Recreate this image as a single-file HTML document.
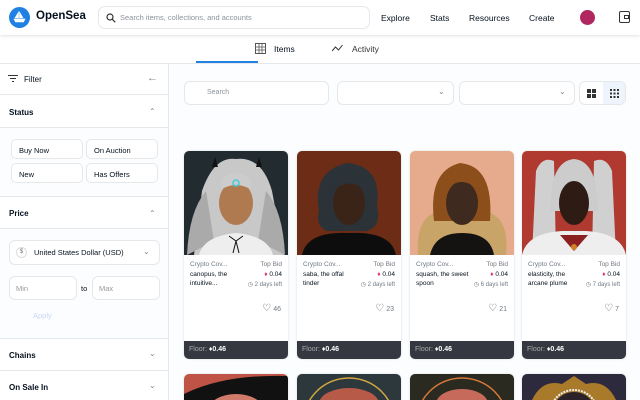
<!DOCTYPE html>
<html><head><meta charset="utf-8"><style>
*{box-sizing:border-box;margin:0;padding:0}
html,body{width:640px;height:400px;overflow:hidden}
body{font-family:"Liberation Sans",sans-serif;background:#fff;position:relative;color:#04111d}
.a{position:absolute}
.hdr{left:0;top:0;width:640px;height:35px;background:#fff;box-shadow:0 1px 3px rgba(0,0,0,.12);z-index:2}
.nav{font-size:8.5px;top:13px}
.tabs{left:0;top:35px;width:640px;height:29px;border-bottom:1px solid #e5e8eb}
.side{left:0;top:64px;width:169px;height:336px;border-right:1px solid #e5e8eb;background:#fff;overflow:hidden}
.sec{position:absolute;left:0;width:168px;border-bottom:1px solid #e5e8eb;font-size:8px;font-weight:bold}
.btn{position:absolute;height:20px;border:1px solid #e5e8eb;border-radius:5px;background:#fff;font-size:7.5px;padding:6px 0 0 7px;font-weight:normal}
.main{left:170px;top:64px;width:470px;height:336px;background:#fcfdfe}
.inp{position:absolute;height:24px;border:1px solid #e5e8eb;border-radius:6px;background:#fff}
.card{position:absolute;width:104px;height:208px;border-radius:5px;overflow:hidden;background:#fff;box-shadow:0 0 2px rgba(0,0,0,.15)}
.card svg{display:block}
.info{position:absolute;top:104px;left:0;width:104px;height:42px;font-size:6.5px;padding:6px 6px}
.floor{position:absolute;left:0;top:190px;width:104px;height:18px;background:#353840;color:#fff;font-size:7px;padding:5px 5px}
.chev{position:absolute;font-size:8px;color:#888;font-weight:normal}
</style></head><body>
<div class="a hdr">
 <svg class="a" style="left:9px;top:7px" width="21" height="21" viewBox="0 0 21 21"><circle cx="10.5" cy="10.5" r="10.5" fill="#2081e2"/><path d="M5 12h11l-1.5 3h-8z M9.5 4.5v7 M10.5 5l3.5 6h-3.5z M9 6l-3 5h3z" fill="#fff" stroke="#fff" stroke-width=".6"/></svg>
 <div class="a" style="left:36px;top:10px;font-size:11.5px;font-weight:bold">OpenSea</div>
 <div class="a" style="left:98px;top:6px;width:272px;height:23px;border:1px solid #e5e8eb;border-radius:7px">
  <svg class="a" style="left:7px;top:6px" width="10" height="10" viewBox="0 0 10 10"><circle cx="4" cy="4" r="3" fill="none" stroke="#333" stroke-width="1.2"/><path d="M6.3 6.3l3 3" stroke="#333" stroke-width="1.2"/></svg>
  <div class="a" style="left:21px;top:6px;font-size:7.5px;color:#8a939b">Search items, collections, and accounts</div>
 </div>
 <div class="a nav" style="left:381px">Explore</div>
 <div class="a nav" style="left:430px">Stats</div>
 <div class="a nav" style="left:469px">Resources</div>
 <div class="a nav" style="left:529px">Create</div>
 <div class="a" style="left:580px;top:10px;width:15px;height:15px;border-radius:50%;background:#b0265f"></div>
 <div class="a" style="left:619px;top:11px;width:11px;height:12px;border:1.5px solid #333;border-radius:2px"><div class="a" style="left:4px;top:3px;width:5px;height:4px;border:1.2px solid #333"></div></div>
</div>
<div class="a tabs">
 <svg class="a" style="left:255px;top:8px" width="11" height="11" viewBox="0 0 11 11"><rect x=".5" y=".5" width="10" height="10" fill="none" stroke="#555"/><path d="M4 .5v10M7 .5v10M.5 4h10M.5 7h10" stroke="#555" stroke-width=".8"/></svg>
 <div class="a" style="left:274px;top:9px;font-size:8.5px">Items</div>
 <div class="a" style="left:196px;top:26px;width:62px;height:2px;background:#2081e2"></div>
 <svg class="a" style="left:332px;top:9px" width="11" height="9" viewBox="0 0 11 9"><path d="M0 7l3.5-4 3 3 4-5" fill="none" stroke="#333" stroke-width="1"/></svg>
 <div class="a" style="left:352px;top:9px;font-size:8.5px;color:#333">Activity</div>
</div>
<div class="a side">
 <div class="sec" style="top:0;height:31px;font-weight:normal;padding:11px 0 0 24px">Filter
  <div class="a" style="left:8px;top:11px;width:10px;border-top:1px solid #333;height:7px"><div style="margin:2px auto 0;width:6px;border-top:1px solid #333"></div><div style="margin:2px auto 0;width:2px;border-top:1px solid #333"></div></div>
  <div class="a" style="left:147px;top:8px;font-size:11px;color:#888;font-weight:normal">←</div></div>
 <div class="sec" style="top:31px;height:33px;padding:13px 0 0 9px">Status<span class="chev" style="left:149px;top:12px">⌃</span></div>
 <div class="sec" style="top:64px;height:69px;background:#fbfdff">
  <div class="btn" style="left:11px;top:11px;width:72px">Buy Now</div>
  <div class="btn" style="left:86px;top:11px;width:72px">On Auction</div>
  <div class="btn" style="left:11px;top:35px;width:72px">New</div>
  <div class="btn" style="left:86px;top:35px;width:72px">Has Offers</div>
 </div>
 <div class="sec" style="top:133px;height:32px;padding:12px 0 0 9px">Price<span class="chev" style="left:149px;top:12px">⌃</span></div>
 <div class="sec" style="top:165px;height:110px;background:#fbfdff;font-weight:normal">
  <div class="inp" style="left:9px;top:11px;width:151px;height:25px;font-size:7.5px;padding:7px 0 0 24px">United States Dollar (USD)
   <div class="a" style="left:6px;top:6px;width:11px;height:11px;border:1px solid #ddd;border-radius:50%;font-size:6px;text-align:center;line-height:9px;color:#777">$</div>
   <span class="chev" style="left:133px;top:6px">⌄</span></div>
  <div class="inp" style="left:9px;top:47px;width:68px;height:24px;font-size:7.5px;color:#999;padding:7px 0 0 6px">Min</div>
  <div class="a" style="left:81px;top:55px;font-size:7.5px">to</div>
  <div class="inp" style="left:92px;top:47px;width:68px;height:24px;font-size:7.5px;color:#999;padding:7px 0 0 6px">Max</div>
  <div class="a" style="left:33px;top:82px;font-size:7.5px;color:#c8d8f0">Apply</div>
 </div>
 <div class="sec" style="top:275px;height:32px;padding:12px 0 0 9px">Chains<span class="chev" style="left:149px;top:10px">⌄</span></div>
 <div class="sec" style="top:307px;height:29px;padding:12px 0 0 9px;border:none">On Sale In<span class="chev" style="left:149px;top:10px">⌄</span></div>
</div>
<div class="a main">
 <div class="inp" style="left:14px;top:17px;width:145px;font-size:7px;color:#8a939b;padding:7px 0 0 22px">Search</div>
 <div class="inp" style="left:167px;top:17px;width:117px"><span class="chev" style="left:100px;top:5px">⌄</span></div>
 <div class="inp" style="left:289px;top:17px;width:116px"><span class="chev" style="left:99px;top:5px">⌄</span></div>
 <div class="inp" style="left:409px;top:17px;width:47px;overflow:hidden">
  <div class="a" style="left:23px;top:0;width:24px;height:24px;background:#eef4fb"></div>
  <svg class="a" style="left:7px;top:7px" width="9" height="9"><rect width="4" height="4" fill="#333"/><rect x="5" width="4" height="4" fill="#333"/><rect y="5" width="4" height="4" fill="#333"/><rect x="5" y="5" width="4" height="4" fill="#333"/></svg>
  <svg class="a" style="left:30px;top:7px" width="9" height="9" fill="#333"><rect width="2" height="2"/><rect x="3.5" width="2" height="2"/><rect x="7" width="2" height="2"/><rect y="3.5" width="2" height="2"/><rect x="3.5" y="3.5" width="2" height="2"/><rect x="7" y="3.5" width="2" height="2"/><rect y="7" width="2" height="2"/><rect x="3.5" y="7" width="2" height="2"/><rect x="7" y="7" width="2" height="2"/></svg>
 </div>
</div>

<div class="card" style="left:184px;top:151px">
 <svg width="104" height="104"><rect width="104" height="104" fill="#222b30"/><path d="M10 104L18 40Q30 5 52 8Q78 5 88 40L100 104z" fill="#c8c8c8"/><path d="M3 104Q5 60 22 40L30 90z M101 104Q99 60 82 40L74 90z" fill="#aaa"/><ellipse cx="52" cy="52" rx="17" ry="22" fill="#b07a50"/><path d="M36 30Q52 15 68 30L66 38Q52 30 38 38z" fill="#ccc"/><path d="M15 104Q20 85 52 82Q84 85 89 104z" fill="#eee"/><path d="M45 85l7 5 7-5M52 90l-3 12M52 90l3 12" stroke="#111" fill="none"/><circle cx="52" cy="32" r="3" fill="none" stroke="#4cd" stroke-width="1.5"/><path d="M28 16l3-10 3 10zM72 16l3-10 3 10z" fill="#111"/></svg>
 <div class="info"><div style="color:#707a83;float:left">Crypto Cov...</div><div style="color:#707a83;float:right">Top Bid</div>
  <div style="clear:both;padding-top:2px;float:left;width:55px;line-height:9px">canopus, the intuitive...</div><div style="float:right;text-align:right;line-height:10px;padding-top:2px"><b style="color:#e03868">♦</b> 0.04<br><span style="color:#707a83;font-size:6px">◷ 2 days left</span></div></div>
 <div class="a" style="right:7px;top:152px;font-size:7px;color:#707a83"><span style="font-size:10px;color:#555">♡</span> 46</div>
 <div class="floor"><span style="color:#aaa">Floor:</span> <b>♦0.46</b></div>
</div>
<div class="card" style="left:297px;top:151px">
 <svg width="104" height="104"><rect width="104" height="104" fill="#6d2c16"/><path d="M22 60Q15 20 50 12Q85 15 80 55Q85 75 70 80L30 80Q18 75 22 60z" fill="#2b3238"/><ellipse cx="52" cy="52" rx="16" ry="22" fill="#3a2418"/><path d="M36 40Q52 25 70 40L70 30Q52 15 34 32z" fill="#2b3238"/><path d="M5 104Q10 80 52 82Q94 80 99 104z" fill="#0d0d0d"/></svg>
 <div class="info"><div style="color:#707a83;float:left">Crypto Cov...</div><div style="color:#707a83;float:right">Top Bid</div>
  <div style="clear:both;padding-top:2px;float:left;width:55px;line-height:9px">saba, the offal tinder</div><div style="float:right;text-align:right;line-height:10px;padding-top:2px"><b style="color:#e03868">♦</b> 0.04<br><span style="color:#707a83;font-size:6px">◷ 2 days left</span></div></div>
 <div class="a" style="right:7px;top:152px;font-size:7px;color:#707a83"><span style="font-size:10px;color:#555">♡</span> 23</div>
 <div class="floor"><span style="color:#aaa">Floor:</span> <b>♦0.46</b></div>
</div>
<div class="card" style="left:410px;top:151px">
 <svg width="104" height="104"><rect width="104" height="104" fill="#e6ab8c"/><path d="M8 104Q5 65 30 60L74 60Q100 65 96 104z" fill="#c9a468"/><path d="M24 70Q18 20 50 12Q84 15 80 70z" fill="#8c4e1a"/><ellipse cx="52" cy="52" rx="16" ry="22" fill="#3e2a1e"/><path d="M36 40Q50 22 70 40L68 28Q52 16 34 30z" fill="#8c4e1a"/><path d="M20 104Q25 82 52 82Q80 82 84 104z" fill="#151312"/></svg>
 <div class="info"><div style="color:#707a83;float:left">Crypto Cov...</div><div style="color:#707a83;float:right">Top Bid</div>
  <div style="clear:both;padding-top:2px;float:left;width:55px;line-height:9px">squash, the sweet spoon</div><div style="float:right;text-align:right;line-height:10px;padding-top:2px"><b style="color:#e03868">♦</b> 0.04<br><span style="color:#707a83;font-size:6px">◷ 6 days left</span></div></div>
 <div class="a" style="right:7px;top:152px;font-size:7px;color:#707a83"><span style="font-size:10px;color:#555">♡</span> 21</div>
 <div class="floor"><span style="color:#aaa">Floor:</span> <b>♦0.46</b></div>
</div>
<div class="card" style="left:522px;top:151px">
 <svg width="104" height="104"><rect width="104" height="104" fill="#b03a30"/><path d="M10 104L14 20Q20 5 32 10L34 104z M94 104L90 20Q84 5 72 10L70 104z" fill="#d0d0d0"/><path d="M28 60Q28 10 52 8Q76 10 76 60z" fill="#ccc"/><ellipse cx="52" cy="52" rx="15" ry="22" fill="#2e1c14"/><path d="M0 104Q5 82 40 80L64 80Q99 82 104 104z" fill="#eee"/><path d="M38 84L52 100L66 84z" fill="#8a2020"/><circle cx="52" cy="96" r="3" fill="#d08020"/></svg>
 <div class="info"><div style="color:#707a83;float:left">Crypto Cov...</div><div style="color:#707a83;float:right">Top Bid</div>
  <div style="clear:both;padding-top:2px;float:left;width:55px;line-height:9px">elasticity, the arcane plume</div><div style="float:right;text-align:right;line-height:10px;padding-top:2px"><b style="color:#e03868">♦</b> 0.04<br><span style="color:#707a83;font-size:6px">◷ 7 days left</span></div></div>
 <div class="a" style="right:7px;top:152px;font-size:7px;color:#707a83"><span style="font-size:10px;color:#555">♡</span> 7</div>
 <div class="floor"><span style="color:#aaa">Floor:</span> <b>♦0.46</b></div>
</div>
<div class="card" style="left:184px;top:374px;height:26px;border-radius:5px 5px 0 0"><svg width="104" height="26"><rect width="104" height="26" fill="#bf5446"/><path d="M0 20Q40 0 104 2L104 26 0 26z" fill="#111"/><ellipse cx="52" cy="34" rx="26" ry="14" fill="#d07a6a"/></svg></div>
<div class="card" style="left:297px;top:374px;height:26px;border-radius:5px 5px 0 0"><svg width="104" height="26"><rect width="104" height="26" fill="#2c383c"/><circle cx="52" cy="50" r="46" fill="none" stroke="#d4a840" stroke-width="1.5"/><ellipse cx="52" cy="30" rx="30" ry="16" fill="#b85a48"/></svg></div>
<div class="card" style="left:410px;top:374px;height:26px;border-radius:5px 5px 0 0"><svg width="104" height="26"><rect width="104" height="26" fill="#2a2a20"/><circle cx="52" cy="50" r="46" fill="none" stroke="#d87838" stroke-width="1.5"/><ellipse cx="52" cy="30" rx="26" ry="15" fill="#c66a5c"/></svg></div>
<div class="card" style="left:522px;top:374px;height:26px;border-radius:5px 5px 0 0"><svg width="104" height="26"><rect width="104" height="26" fill="#2c2a3c"/><path d="M10 26Q20 5 40 10L52 2 64 10Q84 5 94 26z" fill="#a87a2a"/><circle cx="52" cy="40" r="24" fill="none" stroke="#eee" stroke-width="2" stroke-dasharray="2 1"/><circle cx="52" cy="40" r="22" fill="#2a2228"/></svg></div>
</body></html>
